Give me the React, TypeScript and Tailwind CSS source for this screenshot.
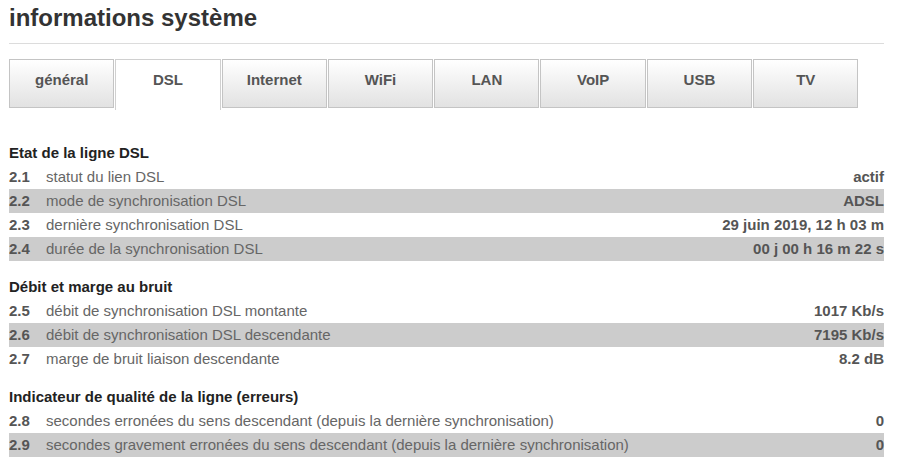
import React from "react";

const tabs = ["général", "DSL", "Internet", "WiFi", "LAN", "VoIP", "USB", "TV"];

type Row = { n: string; label: string; value: string };

const sections: { title: string; rows: Row[] }[] = [
  {
    title: "Etat de la ligne DSL",
    rows: [
      { n: "2.1", label: "statut du lien DSL", value: "actif" },
      { n: "2.2", label: "mode de synchronisation DSL", value: "ADSL" },
      { n: "2.3", label: "dernière synchronisation DSL", value: "29 juin 2019, 12 h 03 m" },
      { n: "2.4", label: "durée de la synchronisation DSL", value: "00 j 00 h 16 m 22 s" },
    ],
  },
  {
    title: "Débit et marge au bruit",
    rows: [
      { n: "2.5", label: "débit de synchronisation DSL montante", value: "1017 Kb/s" },
      { n: "2.6", label: "débit de synchronisation DSL descendante", value: "7195 Kb/s" },
      { n: "2.7", label: "marge de bruit liaison descendante", value: "8.2 dB" },
    ],
  },
  {
    title: "Indicateur de qualité de la ligne (erreurs)",
    rows: [
      { n: "2.8", label: "secondes erronées du sens descendant (depuis la dernière synchronisation)", value: "0" },
      { n: "2.9", label: "secondes gravement erronées du sens descendant (depuis la dernière synchronisation)", value: "0" },
    ],
  },
];

export default function App() {
  return (
    <div className="min-h-screen bg-white px-[9px] pt-[3px] font-['Liberation_Sans',Arial,sans-serif]">
      {/* Title */}
      <h1 className="text-[24px] font-bold leading-[30px] text-[#333]">informations système</h1>
      <div className="mt-[10px] h-px w-[875px] bg-[#dcdcdc]" />

      {/* Tabs */}
      <div className="mt-[15px] flex gap-px">
        {tabs.map((t) =>
          t === "DSL" ? (
            <div
              key={t}
              className="flex h-[51px] w-[105.3px] items-start justify-center border border-b-0 border-[#d0d0d0] bg-white pt-[9px] text-[15px] font-bold text-[#555]"
            >
              {t}
            </div>
          ) : (
            <div
              key={t}
              className="flex h-[49px] w-[105.3px] items-start justify-center border border-[#c4c4c4] bg-gradient-to-b from-white to-[#e2e2e2] pt-[9px] text-[15px] font-bold text-[#555]"
            >
              {t}
            </div>
          )
        )}
      </div>

      {/* Sections */}
      <div className="mt-[31px] w-[875px]">
        {sections.map((s, i) => (
          <div key={s.title} className={i > 0 ? "mt-[14px]" : ""}>
            <h2 className="text-[15px] font-bold leading-[24px] text-[#222]">{s.title}</h2>
            {s.rows.map((r, j) => (
              <div
                key={r.n}
                className={`flex h-[24px] items-center text-[15px] ${j % 2 === 1 ? "bg-[#cccccc]" : ""}`}
              >
                <span className="w-[37px] font-bold text-[#555]">{r.n}</span>
                <span className="flex-1 text-[#666]">{r.label}</span>
                <span className="font-bold text-[#555]">{r.value}</span>
              </div>
            ))}
          </div>
        ))}
      </div>
    </div>
  );
}
